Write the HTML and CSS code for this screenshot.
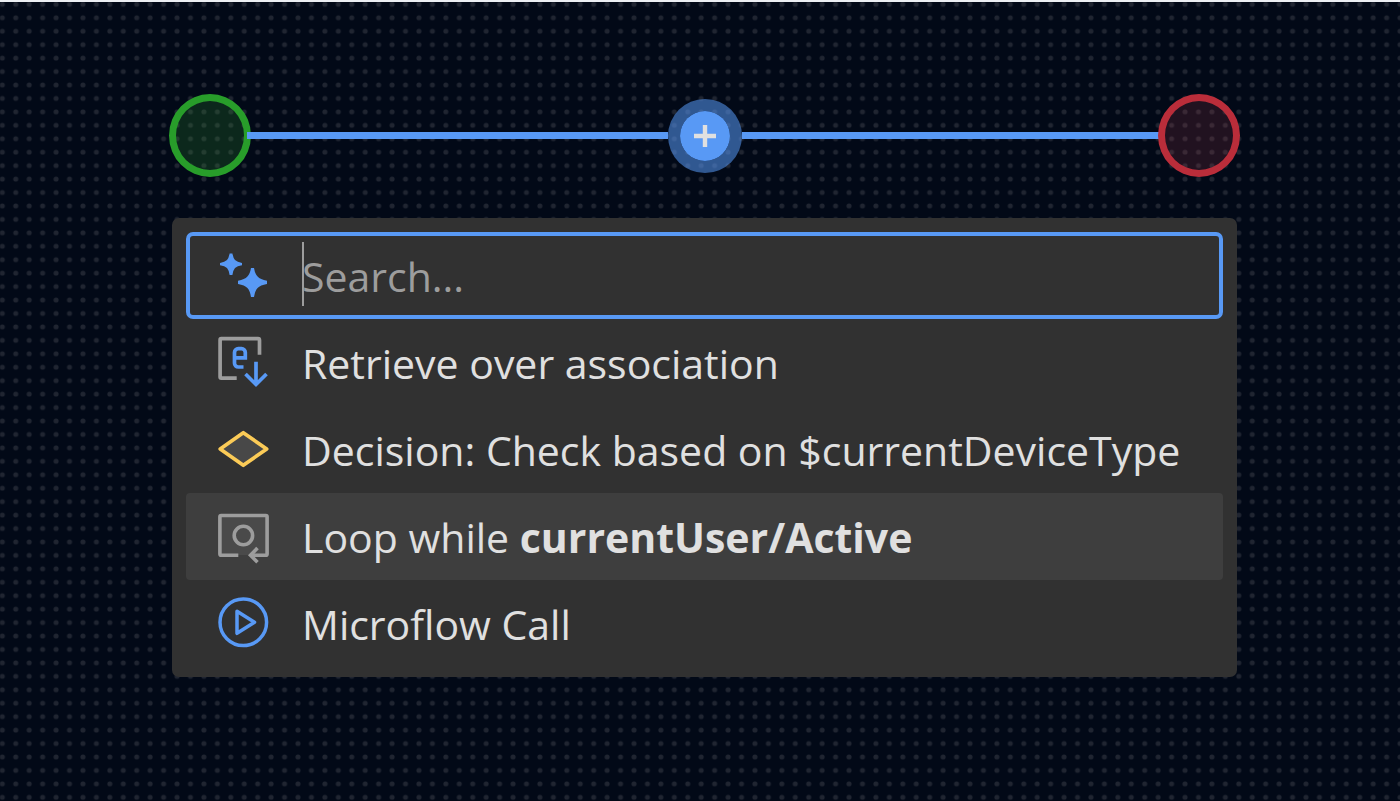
FILE: index.html
```html
<!DOCTYPE html>
<html lang="en">
<head>
    <meta charset="UTF-8">
    <meta name="viewport" content="width=device-width, initial-scale=1.0">
    <title>Microflow editor</title>
    <link rel="stylesheet" href="styles.css">
</head>
<body>
    <!-- dotted canvas -->
    <svg class="grid" aria-hidden="true">
        <defs>
            <pattern id="dots" x="-4.4" y="-4.4" width="13.44" height="13.44" patternUnits="userSpaceOnUse">
                <circle cx="6.72" cy="6.72" r="2.5" fill="#202531"/>
            </pattern>
        </defs>
        <rect width="100%" height="100%" fill="url(#dots)"/>
    </svg>

    <main class="editor">
        <div class="flow">
            <span class="event start"></span>
            <span class="line"></span>
            <button class="add" type="button" aria-label="Add activity">
                <svg width="50" height="50" viewBox="0 0 50 50">
                    <path d="M25 14v22M14 25h22" stroke="#e0e0e0" stroke-width="4.400" fill="none"/>
                </svg>
            </button>
            <span class="line"></span>
            <span class="event end"></span>
        </div>

        <div class="menu">
            <label class="search">
                <svg class="icon" viewBox="0 0 51 51" fill="#5899f5">
                    <path d="M11.600 3.500h2.800q.8 4.500 2.600 6.400 2.200 2.100 7 3v2.400q-4.800.7-7 2.800-1.800 2-2.600 6.900h-2.800q-.8-4.900-2.600-6.900-2.200-2.100-7-2.800v-2.400q4.800-.9 7-3 1.800-1.900 2.600-6.400z"/>
                    <path d="M33 18h3q1 6 3.600 8.500Q42.300 29.500 49 30.800v3.200q-6.700 1.200-9.400 4Q37 40.800 36 47h-3q-1-6.200-3.600-9-2.700-2.800-9.400-4v-3.200q6.700-1.300 9.400-4.300Q32 24 33 18z"/>
                </svg>
                <span class="field">
                    <span class="caret"></span>
                    <input type="text" placeholder="Search..." aria-label="Search">
                </span>
            </label>

            <button class="item" type="button">
                <svg class="icon" viewBox="0 0 51 51" fill="none" stroke-width="3.700">
                    <path d="M18.700 41.200H3.300a1.200 1.200 0 0 1-1.200-1.200V2.900a1.200 1.200 0 0 1 1.200-1.200H40a1.500 1.500 0 0 1 1.500 1.500v14.500" stroke="#9d9d9d"/>
                    <path d="M25.500 30h-5.200a3.800 3.800 0 0 1-3.800-3.800V15.500a3.800 3.800 0 0 1 3.800-3.800h3.200a3.800 3.800 0 0 1 3.800 3.800v5.400H16.500" stroke="#5899f5"/>
                    <path d="M38 24.700v22M27.500 37L38 47.500 48.500 37" stroke="#5899f5"/>
                </svg>
                <span>Retrieve over association</span>
            </button>
            <button class="item" type="button">
                <svg class="icon" viewBox="0 0 51 51" fill="#484848" stroke="#fbcb57" stroke-width="3.700" stroke-linejoin="round">
                    <path d="M25.300 8.700L48.700 25 25.300 41.300 2.200 25z"/>
                </svg>
                <span>Decision: Check based on $currentDeviceType</span>
            </button>
            <button class="item active" type="button">
                <svg class="icon" viewBox="0 0 51 51" fill="none" stroke="#9d9d9d" stroke-width="3.600">
                    <path d="M3 5h45v39H3z" fill="#4a4a4a" stroke="none"/>
                    <path d="M20.300 44.200H3.200a1.300 1.300 0 0 1-1.300-1.300V5.800a1.300 1.300 0 0 1 1.300-1.300h44.600a1.300 1.300 0 0 1 1.300 1.300v37.100a1.300 1.300 0 0 1-1.300 1.300H33.500"/>
                    <circle cx="25.400" cy="24.500" r="9.200"/>
                    <path d="M39.500 37l-7 7.200 7 7"/>
                </svg>
                <span>Loop while <b>currentUser/Active</b></span>
            </button>
            <button class="item" type="button">
                <svg class="icon" viewBox="0 0 51 51" fill="none" stroke="#5899f5" stroke-width="3.500" stroke-linejoin="round">
                    <circle cx="25.300" cy="24.300" r="23.300"/>
                    <path d="M19 13.300L36.500 24.300 19 35.300z"/>
                </svg>
                <span>Microflow Call</span>
            </button>
        </div>
    </main>
</body>
</html>
```

FILE: styles.css
```css
* {
    box-sizing: border-box;
}

body {
    margin: 0;
    min-height: 100vh;
    background: #020917;
    border-top: 2px solid #eceff3;
    font-family: "Open Sans", "Noto Sans", sans-serif;
    color: #e0e0e0;
}

.grid {
    position: absolute;
    top: 2px;
    left: 0;
    width: 100%;
    height: calc(100% - 2px);
    z-index: -1;
}

.editor {
    padding: 92px 163px 0 172px;
}

/* start -> add -> end */
.flow {
    display: flex;
    align-items: center;
    margin: 0 -3px;
}

.event {
    width: 82px;
    height: 83px;
    border: 7px solid;
    border-radius: 50%;
}

.start {
    margin-right: -4px;
    border-color: #289d2a;
    background: rgba(48, 150, 52, 0.22);
}

.end {
    margin-left: -4px;
    border-color: #ba2d3a;
    background: rgba(170, 60, 75, 0.19);
}

.line {
    flex: 1;
    height: 7px;
    background: #5899f5;
}

.add {
    display: flex;
    padding: 0;
    border: 12px solid rgba(88, 153, 245, 0.55);
    border-radius: 50%;
    background: #5899f5;
    background-clip: padding-box;
    cursor: pointer;
}

/* suggestions */
.menu {
    display: flex;
    flex-direction: column;
    margin-top: 41px;
    padding: 14px 14px 10px;
    border-radius: 7px;
    background: #313131;
}

.search,
.item {
    display: flex;
    align-items: center;
    gap: 33px;
    height: 87px;
    padding: 0 32px;
    border: 0;
    border-radius: 4px;
    background: none;
    color: inherit;
    font-family: inherit;
    font-size: 41px;
    text-align: left;
    white-space: nowrap;
}

.search {
    padding: 0 28px;
    border: 4px solid #5899f5;
    border-radius: 7px;
}

.item {
    cursor: pointer;
}

.item:hover,
.active {
    background: #3e3e3e;
}

.icon {
    flex: none;
    width: 51px;
    height: 51px;
    overflow: visible;
}

.field {
    position: relative;
    flex: 1;
}

.field input {
    display: block;
    width: 100%;
    padding: 0;
    border: 0;
    outline: none;
    background: none;
    color: inherit;
    font: inherit;
}

.field input::placeholder {
    color: #9d9d9d;
    opacity: 1;
}

.caret {
    position: absolute;
    top: 50%;
    left: 0;
    width: 2px;
    height: 64px;
    margin-top: -34px;
    background: #9d9d9d;
}
```
